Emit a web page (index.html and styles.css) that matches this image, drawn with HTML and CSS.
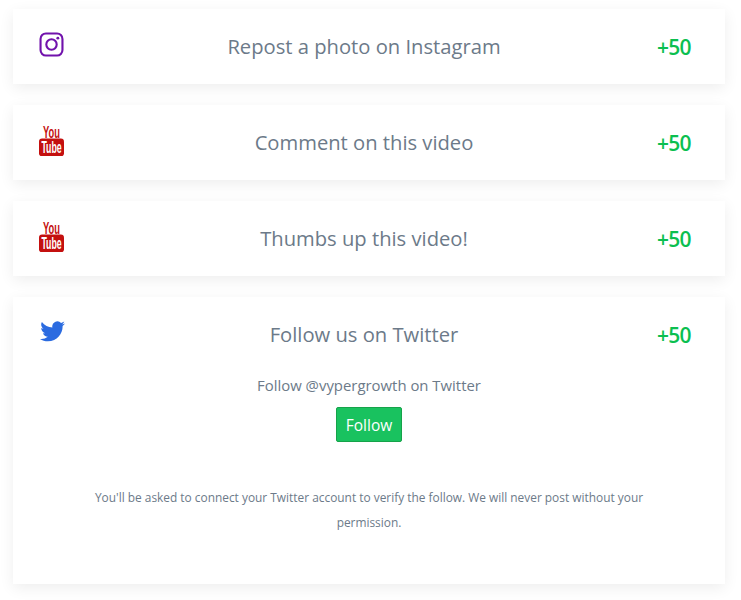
FILE: index.html
```html
<!DOCTYPE html>
<html lang="en">
<head>
    <meta charset="UTF-8">
    <title>Earn points</title>
    <link rel="stylesheet" href="styles.css">
</head>
<body>

<div class="tasks">
    <div class="card">
        <div class="row">
            <svg class="icon icon-ig" viewBox="0 0 26 26" fill="none" stroke="#7112ac" stroke-width="2.2">
                <rect x="1.6" y="1.6" width="22.8" height="22.8" rx="5.6"/>
                <circle cx="13" cy="13" r="5.4"/>
                <circle cx="19.6" cy="6.4" r="1.5" fill="#7112ac" stroke="none"/>
            </svg>
            <div class="title">Repost a photo on Instagram</div>
            <div class="points">+50</div>
        </div>
    </div>

    <div class="card">
        <div class="row">
            <svg class="icon icon-yt" viewBox="0 -2 24 32">
                <text transform="scale(0.6 1)" x="20" y="12" class="yt-you">You</text>
                <rect x="0" y="13" width="24" height="17" rx="3" fill="#c4100f"/>
                <text transform="scale(0.56 1)" x="21.430" y="27" class="yt-tube">Tube</text>
            </svg>
            <div class="title">Comment on this video</div>
            <div class="points">+50</div>
        </div>
    </div>

    <div class="card">
        <div class="row">
            <svg class="icon icon-yt" viewBox="0 -2 24 32">
                <text transform="scale(0.6 1)" x="20" y="12" class="yt-you">You</text>
                <rect x="0" y="13" width="24" height="17" rx="3" fill="#c4100f"/>
                <text transform="scale(0.56 1)" x="21.430" y="27" class="yt-tube">Tube</text>
            </svg>
            <div class="title">Thumbs up this video!</div>
            <div class="points">+50</div>
        </div>
    </div>

    <div class="card">
        <div class="row">
            <svg class="icon icon-tw" viewBox="0 0 26 22" fill="#2b6be0">
                <path d="M26 2.6c-.9.4-1.9.7-2.9.8 1.1-.7 1.8-1.600 2.200-2.800-1 .6-2 1-3.200 1.300A5.100 5.100 0 0 0 13.400 6.500C9.200 6.300 5.400 4.300 2.900.9c-1.400 2.300-.7 5.300 1.600 6.800-.8 0-1.600-.2-2.300-.6 0 2.500 1.700 4.600 4.100 5.100-.8.200-1.500.2-2.300.1.700 2.100 2.600 3.500 4.800 3.500A10.300 10.300 0 0 1 1 18c2.300 1.500 5 2.300 7.900 2.300 9.600 0 15-8.100 14.700-15.400 1-.7 1.800-1.500 2.400-2.300z"/>
            </svg>
            <div class="title">Follow us on Twitter</div>
            <div class="points">+50</div>
        </div>
        <div class="detail">
            <p class="prompt">Follow @vypergrowth on Twitter</p>
            <button class="follow">Follow</button>
            <p class="note">You'll be asked to connect your Twitter account to verify the follow. We will never post without your permission.</p>
        </div>
    </div>
</div>

</body>
</html>
```

FILE: styles.css
```css
body {
    margin: 0;
    background: #fff;
    font-family: "Open Sans", sans-serif;
    color: #6c7a89;
}

.tasks {
    display: flex;
    flex-direction: column;
    gap: 21px;
    padding: 9px 16px 16px 13px;
}

.card {
    background: #fff;
    box-shadow: 0 4px 14px rgba(0, 0, 0, 0.07);
}

.row {
    display: flex;
    align-items: flex-start;
    height: 75px;
    padding: 0 33px 0 26px;
}

.icon {
    width: 26px;
    flex-shrink: 0;
}

.icon-ig {
    width: 25px;
    margin: 23px 1px 0 0;
}

.icon-yt {
    width: 25px;
    margin: 18px 1px 0 0;
}

.icon-tw {
    margin-top: 24px;
}

.title {
    flex: 1;
    text-align: center;
    font-size: 20.200px;
    line-height: 75px;
    padding-left: 6px;
}

.points {
    width: 35px;
    font-size: 21px;
    line-height: 76px;
    font-weight: 600;
    color: #0bbf50;
    letter-spacing: -0.8px;
}

.yt-you, .yt-tube {
    font-family: "Liberation Sans", sans-serif;
    font-weight: 700;
    font-size: 15px;
    text-anchor: middle;
}

.yt-you {
    fill: #c4100f;
}

.yt-tube {
    fill: #fff;
}

.detail {
    text-align: center;
    padding: 2px 0 49px;
}

.prompt {
    margin: 0;
    font-size: 14.900px;
    line-height: 22px;
}

.follow {
    display: block;
    margin: 11px auto 0;
    width: 66px;
    height: 35px;
    padding: 0;
    border: 1px solid #16a34a;
    border-radius: 2px;
    background: #19c25f;
    color: #fff;
    font-family: inherit;
    font-size: 15.500px;
}

.note {
    max-width: 570px;
    margin: 43px auto 0;
    font-size: 11.900px;
    line-height: 25px;
}
```
